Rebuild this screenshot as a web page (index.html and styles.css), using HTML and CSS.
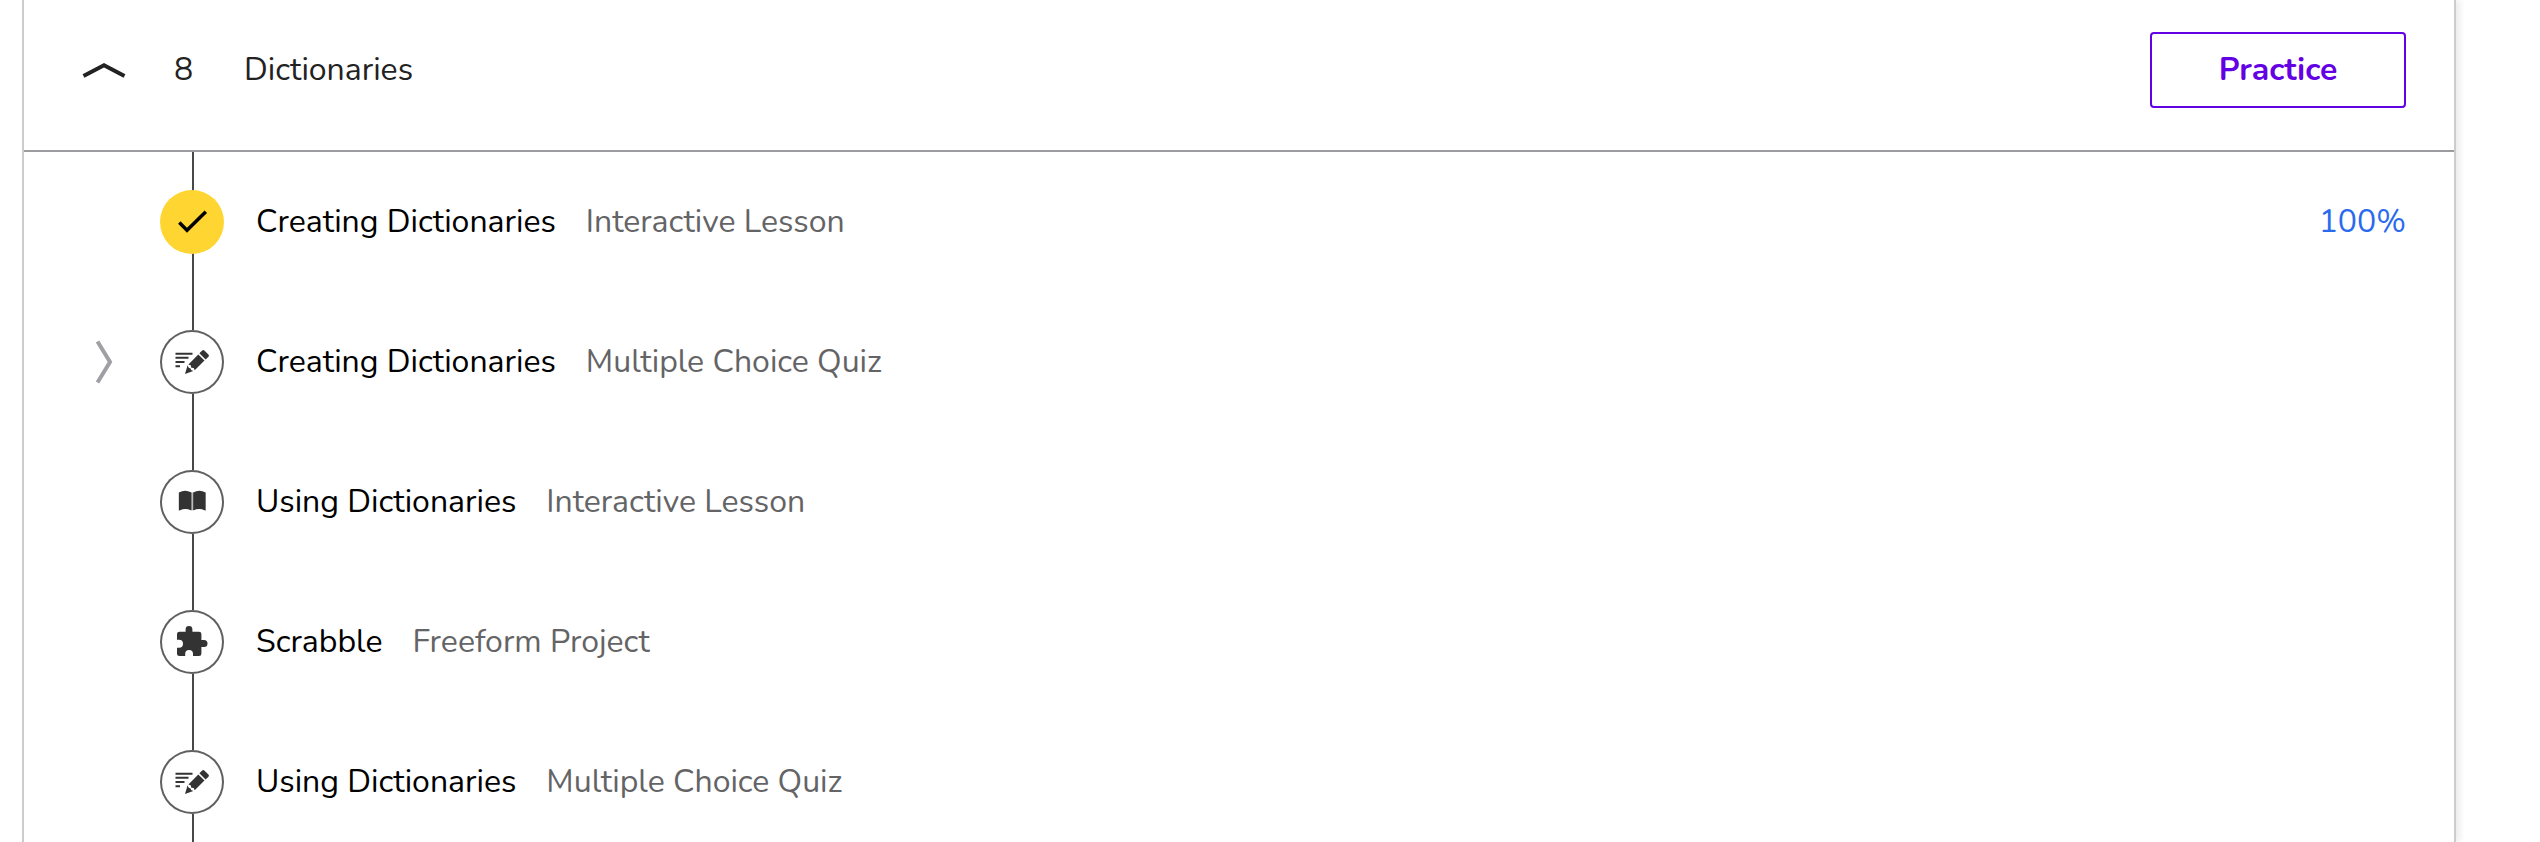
FILE: index.html
```html
<!DOCTYPE html>
<html lang="en">
<head>
<meta charset="utf-8">
<title>Dictionaries</title>
<link rel="stylesheet" href="styles.css">
</head>
<body>
<svg class="defs" aria-hidden="true">
  <symbol id="quiz" viewBox="0 0 64 64">
    <path d="M15.500 23.700h17M15.500 27.800h13M15.500 32h9M15.500 36.200h4.500" stroke="#333" stroke-width="2" fill="none"/>
    <path d="M38.300 24.400 44.500 30.400 34.700 40.300 33.700 37.900 31.300 37.700 30.700 35.300 28.400 34.400zM27.600 35.300 28.700 37.800 30.600 38.400 31.100 40 33.300 41.100 25 44.100zM39.400 23.300 42.200 20.500Q43.200 19.500 44.300 20.500L48.400 24.600Q49.500 25.700 48.500 26.700L45.600 29.500z" fill="#333"/>
  </symbol>
  <symbol id="book" viewBox="0 0 64 64">
    <path d="M18.500 22.500h27.500v18h-27.500z" fill="#bbb"/>
    <path d="M19 22.500Q25 19 31.400 22.500V40.500Q25 37.500 19 40.500zM33.200 22.500Q39.500 19 45.500 22.500V40.500Q39.500 37.500 33.200 40.500z" fill="#333"/>
    <path d="M19.500 41Q25 36.800 32.300 41 39.500 36.800 45 41z" fill="#fff"/>
  </symbol>
  <symbol id="puzzle" viewBox="0 0 64 64">
    <path d="M19.500 21.700H25.600V19.300a3.400 3.400 0 0 1 6.800 0V21.700H39q2.400 0 2.400 2.400V30H44a3.500 3.500 0 0 1 0 7H41.400V43.500q0 2.500-2.400 2.500H33V43.800a3.900 3.900 0 0 0-7.800 0V46H19.500Q17 46 17 43.500V37.800H19a4 4 0 0 0 0-8H17V24.100q0-2.400 2.500-2.400z" fill="#333"/>
  </symbol>
</svg>
<main class="panel">
  <header class="head">
    <button class="toggle" type="button" aria-label="Collapse unit" aria-expanded="true">
      <svg width="44" height="44" viewBox="0 0 44 44"><path d="M1.500 28 22 17.200 42.500 28" fill="none" stroke="#222" stroke-width="4"/></svg>
    </button>
    <span class="number">8</span>
    <h1 class="name">Dictionaries</h1>
    <button class="practice" type="button">Practice</button>
  </header>
  <ul class="list">
    <li class="row">
      <span class="expand"></span>
      <span class="rail"><span class="badge done"><svg viewBox="0 0 64 64"><path d="M19.300 32.600 27 40.200 45.800 21.800" fill="none" stroke="#000" stroke-width="3.500"/></svg></span></span>
      <a class="title" href="#">Creating Dictionaries</a>
      <span class="kind">Interactive Lesson</span>
      <span class="score">100%</span>
    </li>
    <li class="row">
      <button class="expand" type="button" aria-label="Expand quiz"><svg width="44" height="44" viewBox="0 0 44 44"><path d="M15.500 1.500 28 22 15.500 42.500" fill="none" stroke="#a0a0a4" stroke-width="4"/></svg></button>
      <span class="rail"><span class="badge"><svg><use href="#quiz"/></svg></span></span>
      <a class="title" href="#">Creating Dictionaries</a>
      <span class="kind">Multiple Choice Quiz</span>
    </li>
    <li class="row">
      <span class="expand"></span>
      <span class="rail"><span class="badge"><svg><use href="#book"/></svg></span></span>
      <a class="title" href="#">Using Dictionaries</a>
      <span class="kind">Interactive Lesson</span>
    </li>
    <li class="row">
      <span class="expand"></span>
      <span class="rail"><span class="badge"><svg><use href="#puzzle"/></svg></span></span>
      <a class="title" href="#">Scrabble</a>
      <span class="kind">Freeform Project</span>
    </li>
    <li class="row">
      <span class="expand"></span>
      <span class="rail"><span class="badge"><svg><use href="#quiz"/></svg></span></span>
      <a class="title" href="#">Using Dictionaries</a>
      <span class="kind">Multiple Choice Quiz</span>
    </li>
  </ul>
</main>
</body>
</html>
```
FILE: styles.css
```css
* { box-sizing: border-box; }
body {
  margin: 0;
  background: #fff;
  color: #000;
  font: 32px/40px Nunito, Lato, sans-serif;
}
.defs { display: none; }
button { font: inherit; padding: 0; border: 0; background: none; cursor: pointer; }
.panel {
  height: 100vh;
  overflow: hidden;
  margin: 0 84px 0 22px;
  border: solid #ccc;
  border-width: 0 2px;
  box-shadow: 4px 0 6px rgba(0, 0, 0, 0.08);
}
.head {
  display: flex;
  align-items: center;
  padding: 32px 48px 42px 58px;
  border-bottom: 2px solid #9c9ca0;
  color: #222;
}
.toggle, .expand { display: flex; width: 44px; flex: none; }
.number { width: 70px; margin-left: 48px; }
.name { margin: 0; font-size: 32px; font-weight: 400; }
.practice {
  width: 256px;
  height: 76px;
  margin-left: auto;
  border: 2px solid #6400e4;
  border-radius: 4px;
  color: #6400e4;
  font-weight: 700;
}
.list { list-style: none; margin: 0; padding: 0; }
.row {
  display: flex;
  align-items: center;
  height: 140px;
  padding: 0 48px 0 58px;
}
.rail {
  display: flex;
  align-items: center;
  align-self: stretch;
  margin: 0 32px 0 34px;
  background: linear-gradient(#484848, #484848) 32px 0 / 2px 100% no-repeat;
}
.badge {
  display: flex;
  width: 64px;
  height: 64px;
  border-radius: 50%;
  background: #fff;
  box-shadow: inset 0 0 0 2px #606060;
}
.badge svg { width: 64px; height: 64px; }
.done { background: #ffd532; box-shadow: none; }
.title { color: #000; text-decoration: none; }
.kind { margin-left: 30px; color: #646466; }
.score { margin-left: auto; color: #2a6bee; }
```
